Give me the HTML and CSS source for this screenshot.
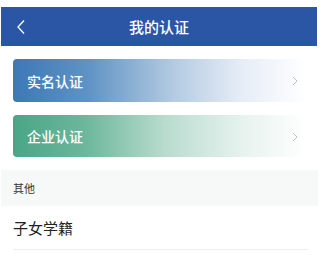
FILE: index.html
```html
<!DOCTYPE html>
<html lang="zh">
<head>
<meta charset="utf-8">
<link rel="stylesheet" href="styles.css">
</head>
<body>
<div class="page">
  <header class="topbar">
    <svg class="back" width="10" height="16" viewBox="0 0 10 16"><path d="M8 1.5 L2 8 L8 14.5" fill="none" stroke="#fff" stroke-width="1.3"/></svg>
    <h1 class="title">我的认证</h1>
  </header>
  <div class="cards">
    <div class="card card-blue"><span>实名认证</span><svg class="chev" width="6" height="10" viewBox="0 0 6 10"><path d="M1 1 L5 5 L1 9" fill="none" stroke="#bcc0c6" stroke-width="1"/></svg></div>
    <div class="card card-green"><span>企业认证</span><svg class="chev" width="6" height="10" viewBox="0 0 6 10"><path d="M1 1 L5 5 L1 9" fill="none" stroke="#bcc0c6" stroke-width="1"/></svg></div>
  </div>
  <div class="section">其他</div>
  <div class="item">子女学籍</div>
</div>
</body>
</html>
```
FILE: styles.css
```css
html, body { margin: 0; padding: 0; background: #fff; }
body { font-family: "Noto Sans CJK SC", "Noto Sans", sans-serif; }
.page { width: 320px; padding-top: 7px; }
.topbar {
  margin: 0 3px 0 1px;
  height: 39px;
  background: #2a56a5;
  display: flex;
  align-items: center;
  justify-content: center;
  position: relative;
}
.back { position: absolute; left: 15px; top: 12px; }
.title { margin: 0; font-size: 15px; font-weight: 500; color: #fff; line-height: 1; }
.cards { display: flex; flex-direction: column; gap: 13px; margin: 13px 14px 0 13px; }
.card {
  height: 43px;
  border-radius: 4px;
  display: flex;
  align-items: center;
  justify-content: space-between;
  padding: 0 8px 0 14px;
  color: #fff;
  font-size: 14px;
  font-weight: 500;
}
.card-blue { background: linear-gradient(90deg, #3d78b6 0%, #5d92c4 25%, #b4cbe2 55%, #e6edf7 78%, #fff 100%); }
.card-green { height: 42px; background: linear-gradient(90deg, #4aa587 0%, #6db79d 25%, #b9dccf 52%, #e6f2ee 78%, #fff 100%); }
.chev { margin-top: 1px; }
.section {
  margin: 13px 2px 0 1px;
  height: 36px;
  background: #f7f9f9;
  display: flex;
  align-items: center;
  padding-left: 12px;
  font-size: 11px;
  color: #333;
}
.item {
  margin: 0 12px 0 13px;
  height: 43px;
  border-bottom: 1px solid #eeeeee;
  display: flex;
  align-items: center;
  font-size: 15px;
  color: #222;
}
```
